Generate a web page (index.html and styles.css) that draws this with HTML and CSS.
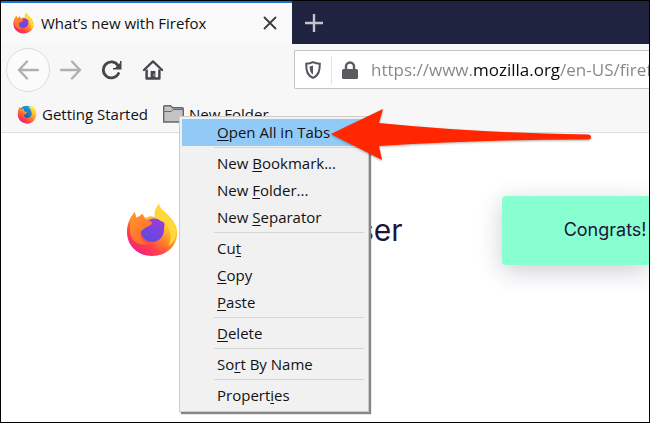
FILE: index.html
```html
<!DOCTYPE html>
<html lang="en">
<head>
<meta charset="utf-8">
<title>What’s new with Firefox</title>
<link rel="stylesheet" href="styles.css">
</head>
<body>
<svg class="defs" aria-hidden="true">
  <defs>
    <linearGradient id="flame" x1="0.85" y1="0.1" x2="0.25" y2="0.95">
      <stop offset="0" stop-color="#fff04a"/>
      <stop offset="0.3" stop-color="#ffc42e"/>
      <stop offset="0.55" stop-color="#ff8228"/>
      <stop offset="0.8" stop-color="#ff3b50"/>
      <stop offset="1" stop-color="#f0247c"/>
    </linearGradient>
    <linearGradient id="fox" x1="0" y1="0" x2="0.6" y2="1">
      <stop offset="0" stop-color="#ff9a2a"/>
      <stop offset="1" stop-color="#ff6a2c"/>
    </linearGradient>
    <linearGradient id="violet" x1="0.8" y1="0" x2="0.2" y2="1">
      <stop offset="0" stop-color="#9a3be0"/>
      <stop offset="1" stop-color="#5a4be0"/>
    </linearGradient>
    <linearGradient id="ocean" x1="0.8" y1="0" x2="0.2" y2="1">
      <stop offset="0" stop-color="#1fa6ea"/>
      <stop offset="1" stop-color="#1b3f88"/>
    </linearGradient>
    <symbol id="firefox" viewBox="0 0 52 54">
      <path fill="url(#flame)" d="M33 1c1 5 5 7 9 11 6 6 10 12 9 20-1 12-11 21-25 21C12 53 1 43 1 29 1 21 4 14 9 9c0 3 1 5 2 6 2-2 4-3 6-4 0 2 1 3 3 4 3-2 6-2 9-1-1-5 0-9 4-13z"/>
      <path fill="url(#violet)" d="M19 20c4-5 12-6 16-2 4 1 4 4 3 6 1 9-5 15-12 15-6 0-11-5-11-11 0-3 2-6 4-8z"/>
      <path fill="#ffd83d" d="M33 1c1 5 5 7 9 11 6 6 9 13 8 20-1 5-4 9-8 11 5-8 3-17-4-24-3-1-6-3-8-5-1-5 0-9 3-13z"/>
      <path fill="url(#fox)" d="M4 17c1-3 3-6 5-8 0 3 1 5 2 6 2-2 4-3 6-4 0 3 1 5 4 6 2 1 5 1 5 3s-4 3-7 5c-2 2-4 2-5 5 0 6 4 10 9 11-11 3-18-4-19-12z"/>
    </symbol>
    <symbol id="firefox-blue" viewBox="0 0 52 54">
      <circle cx="25" cy="27" r="22" fill="url(#ocean)"/>
      <path fill="url(#flame)" d="M38 2c8 5 13 14 13 25 0 15-11 26-25 26S1 43 1 28C1 20 3 12 7 7l3 7 7-2 1 7 8 3-3 5-6 3c1 6 7 9 13 7 8-2 11-10 7-18-1-5-4-8-8-11 5-1 9 0 12 3 0-4-1-7-4-9z"/>
    </symbol>
  </defs>
</svg>

<header class="tabstrip">
  <div class="tab">
    <svg class="tab-icon"><use href="#firefox"/></svg>
    <span class="tab-title">What’s new with Firefox</span>
    <button class="icon-button close" aria-label="Close tab">
      <svg viewBox="0 0 14 14"><path d="M1.500 1.500l11 11M12.500 1.500l-11 11" stroke="#3c3c40" stroke-width="1.800" stroke-linecap="round"/></svg>
    </button>
  </div>
  <button class="icon-button add" aria-label="New tab">
    <svg viewBox="0 0 18 18"><path d="M9 0v18M0 9h18" stroke="#c4c4d0" stroke-width="2.400"/></svg>
  </button>
</header>

<nav class="toolbar">
  <button class="icon-button back" aria-label="Back">
    <svg viewBox="0 0 22 20"><path d="M10 1.500L2 10l8 8.500M2 10h19" class="stroke-pale"/></svg>
  </button>
  <button class="icon-button forward" aria-label="Forward">
    <svg viewBox="0 0 22 20"><path d="M12 1.500L20 10l-8 8.500M20 10H1" class="stroke-pale"/></svg>
  </button>
  <button class="icon-button reload" aria-label="Reload">
    <svg viewBox="0 0 22 20"><path d="M17.500 13.500A8 8 0 1 1 17 5.500" fill="none" stroke="#47474b" stroke-width="2.800" stroke-linecap="round"/><path d="M20.500 1v8.500H12v-1.500h2l5-5V1z" fill="#47474b"/></svg>
  </button>
  <button class="icon-button home" aria-label="Home">
    <svg viewBox="0 0 22 21"><path d="M1.500 10.500L11 1.500l9.500 9" fill="none" stroke="#47474b" stroke-width="2.400" stroke-linecap="round" stroke-linejoin="round"/><path d="M4.300 10v9.500h13.400V10" fill="none" stroke="#47474b" stroke-width="2.600" stroke-linejoin="round"/><path d="M8.500 19v-7.500h5V19z" fill="#47474b"/><path d="M11.500 14.500h1V17h-1z" fill="#bbb"/></svg>
  </button>
  <div class="urlbar">
    <svg class="shield" viewBox="0 0 16 18"><path d="M8 1.200c2.500 1.200 4.500 1.500 6.800 1.600 0 7-1 11.500-6.800 14C2.200 14.300 1.200 9.800 1.200 2.800 3.500 2.700 5.500 2.400 8 1.200z" fill="none" stroke="#55555a" stroke-width="2"/><path d="M8 4.500v9C5.500 12 4.800 9.500 4.600 5.500 6 5.300 7 5 8 4.500z" fill="#55555a"/></svg>
    <span class="divider"></span>
    <svg class="lock" viewBox="0 0 16 18"><path d="M4 9V5.500a4 4 0 0 1 8 0V9" fill="none" stroke="#5b5b5f" stroke-width="2.400"/><rect y="8" width="16" height="10" rx="1.500" fill="#5b5b5f"/></svg>
    <input class="url" type="text" aria-label="Address" value="https://www.mozilla.org/en-US/firefox">
  </div>
</nav>

<nav class="bookmarks">
  <a class="bookmark" href="#">
    <svg class="bookmark-icon"><use href="#firefox-blue"/></svg>
    Getting Started
  </a>
  <div class="folder">
    <button class="bookmark">
      <svg class="folder-icon" viewBox="0 0 21 18"><path d="M.700 17V1.500l.8-.8h6l2 2h10l.8.8V17z" fill="#c3c3c5" stroke="#67676b" stroke-width="1.400"/><path d="M1.400 6.500h7l2-2h9" fill="none" stroke="#67676b"/></svg>
      New Folder
    </button>
    <div class="menu" role="menu">
      <button class="item active" role="menuitem"><u>O</u>pen All in Tabs</button>
      <hr>
      <button class="item" role="menuitem">New <u>B</u>ookmark...</button>
      <button class="item" role="menuitem">New <u>F</u>older...</button>
      <button class="item" role="menuitem">New <u>S</u>eparator</button>
      <hr>
      <button class="item" role="menuitem">Cu<u>t</u></button>
      <button class="item" role="menuitem"><u>C</u>opy</button>
      <button class="item" role="menuitem"><u>P</u>aste</button>
      <hr>
      <button class="item" role="menuitem"><u>D</u>elete</button>
      <hr>
      <button class="item" role="menuitem">So<u>r</u>t By Name</button>
      <hr>
      <button class="item" role="menuitem">Propert<u>i</u>es</button>
      <svg class="pointer" viewBox="0 0 264 56" aria-hidden="true"><path d="M2 26L54 1l-4 14q100 10 209 11.500 3 0 3 2.500T259 31.500q-109 0-209 6.500l3 14z" fill="#ff2600"/></svg>
    </div>
  </div>
</nav>

<main class="page">
  <svg class="logo" aria-hidden="true"><use href="#firefox"/></svg>
  <span class="wordmark">Firefox Browser</span>
  <div class="notice">Congrats!</div>
</main>
</body>
</html>
```
FILE: styles.css
```css
* {
  box-sizing: border-box;
}

body {
  margin: 0;
  min-height: 100vh;
  display: flex;
  flex-direction: column;
  overflow: hidden;
  border: 1px solid #000;
  background: #fff;
  color: #111;
  font: 15px/20px "Open Sans", "Noto Sans", sans-serif;
}

button {
  border: 0;
  padding: 0;
  background: none;
  color: inherit;
  font: inherit;
}

svg {
  display: block;
  flex: none;
}

.defs {
  position: absolute;
  width: 0;
  height: 0;
}

.icon-button {
  display: flex;
  flex: none;
  align-items: center;
  justify-content: center;
}

/* Tabs */
.tabstrip {
  display: flex;
  height: 43px;
  background: #202340;
}

.tab {
  display: flex;
  align-items: center;
  width: 291px;
  padding: 0 15px 2px 12px;
  border-top: 2px solid #1a6fe0;
  background: #f9f9fa;
}

.tab-icon {
  width: 21px;
  height: 22px;
}

.tab-title {
  flex: 1;
  margin-left: 7px;
  white-space: nowrap;
}

.close svg {
  width: 14px;
  height: 14px;
}

.add {
  width: 44px;
}

.add svg {
  width: 18px;
  height: 18px;
}

/* Navigation */
.toolbar {
  display: flex;
  align-items: center;
  height: 51px;
  padding-left: 5px;
  background: #f7f7f8;
}

.back {
  width: 44px;
  height: 44px;
  border: 1px solid #dcdcde;
  border-radius: 50%;
  background: #fbfbfc;
}

.forward,
.reload,
.home {
  width: 41px;
  height: 40px;
}

.toolbar .icon-button svg {
  width: 22px;
  height: 20px;
}

.stroke-pale {
  fill: none;
  stroke: #b0b0b3;
  stroke-width: 2.4;
  stroke-linecap: round;
  stroke-linejoin: round;
}

.urlbar {
  display: flex;
  flex: 1;
  align-items: center;
  min-width: 0;
  height: 39px;
  margin-left: 121px;
  padding-left: 10px;
  border: 1px solid #c4c4c8;
  border-right: 0;
  border-radius: 2px 0 0 2px;
  background: #fff;
}

.shield,
.lock {
  width: 16px;
  height: 18px;
}

.divider {
  width: 1px;
  height: 28px;
  margin: 0 10px;
  background: #e2e2e4;
}

/* The host name is darker than the rest of the address. */
.url {
  flex: 1;
  min-width: 0;
  margin-left: 13px;
  padding: 0;
  border: 0;
  outline: 0;
  background: linear-gradient(90deg, #85858a 102px, #0c0c0d 102px 189px, #85858a 189px);
  background-clip: text;
  color: transparent;
  font: 17px/24px "Open Sans", "Noto Sans", sans-serif;
}

/* Bookmarks */
.bookmarks {
  display: flex;
  align-items: center;
  gap: 15px;
  height: 38px;
  padding-left: 16px;
  border-bottom: 1px solid #dfdfe1;
  background: #f7f7f8;
}

.bookmark {
  display: flex;
  align-items: center;
  gap: 5px;
  color: inherit;
  text-decoration: none;
  white-space: nowrap;
}

.bookmark-icon {
  width: 20px;
  height: 20px;
}

.folder {
  position: relative;
}

.folder-icon {
  width: 21px;
  height: 18px;
}

/* Context menu */
.menu {
  position: absolute;
  top: 12px;
  left: 16px;
  width: 190px;
  padding: 2px;
  border: 1px solid #ccc;
  background: #f1f1f1;
  box-shadow: 2px 2px 1px #858585;
}

.item {
  display: block;
  width: 100%;
  height: 27px;
  padding-left: 35px;
  text-align: left;
  white-space: nowrap;
}

.item u {
  text-underline-offset: 2px;
}

.active {
  background: #91c9f7;
}

.menu hr {
  height: 1px;
  margin: 1px 2px 2px 32px;
  border: 0;
  background: #d6d6d6;
}

.pointer {
  position: absolute;
  top: -9px;
  left: 149px;
  width: 264px;
  height: 56px;
  filter: drop-shadow(0 1px 1px #0005);
}

/* Page */
.page {
  display: flex;
  align-items: center;
  height: 194px;
  padding-left: 125px;
  font-family: Inter, sans-serif;
}

.logo {
  width: 52px;
  height: 54px;
}

.wordmark {
  margin-left: 2px;
  color: #20123a;
  font-size: 30px;
  line-height: 40px;
  white-space: nowrap;
}

.notice {
  flex: 1;
  margin-left: 99px;
  padding: 24px 0 25px 62px;
  border-radius: 4px 0 0 4px;
  background: #88ffd1;
  box-shadow: 0 6px 24px #20123a38;
  color: #20123a;
  font-size: 18px;
  white-space: nowrap;
}
```
